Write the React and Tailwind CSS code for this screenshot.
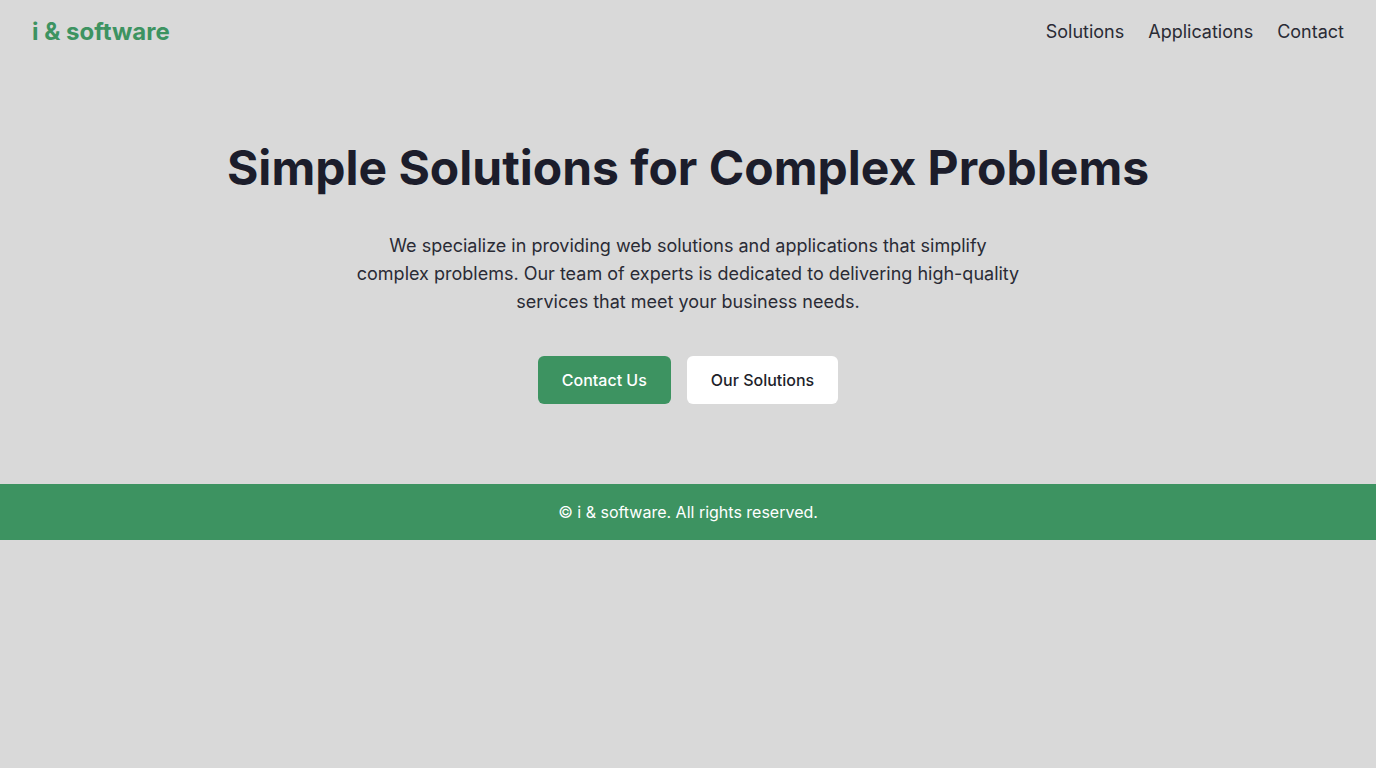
export default function App() {
  return (
    <div className="min-h-screen bg-[#d9d9d9] text-[#1e1f2b]" style={{ fontFamily: "Inter, 'Noto Sans', sans-serif" }}>
      <header className="flex items-center justify-between px-8 py-4">
        <div className="text-2xl font-bold text-[#3d9361]">i &amp; software</div>
        <nav className="flex gap-6 text-lg text-[#2a2b35]">
          <a>Solutions</a>
          <a>Applications</a>
          <a>Contact</a>
        </nav>
      </header>
      <section className="py-20 flex flex-col items-center text-center">
        <h1 className="text-5xl leading-none font-bold text-[#1c1d2b]">Simple Solutions for Complex Problems</h1>
        <p className="mt-10 max-w-2xl text-lg leading-7 text-[#2a2b35]">
          We specialize in providing web solutions and applications that simplify complex problems. Our team of experts is dedicated to delivering high-quality services that meet your business needs.
        </p>
        <div className="mt-10 flex gap-4">
          <button className="rounded-md bg-[#3d9361] px-6 py-3 text-base font-medium text-white">Contact Us</button>
          <button className="rounded-md bg-white px-6 py-3 text-base font-medium text-[#1e1f2b]">Our Solutions</button>
        </div>
      </section>
      <footer className="bg-[#3d9361] py-4 text-center text-base text-white">© i &amp; software. All rights reserved.</footer>
    </div>
  );
}
